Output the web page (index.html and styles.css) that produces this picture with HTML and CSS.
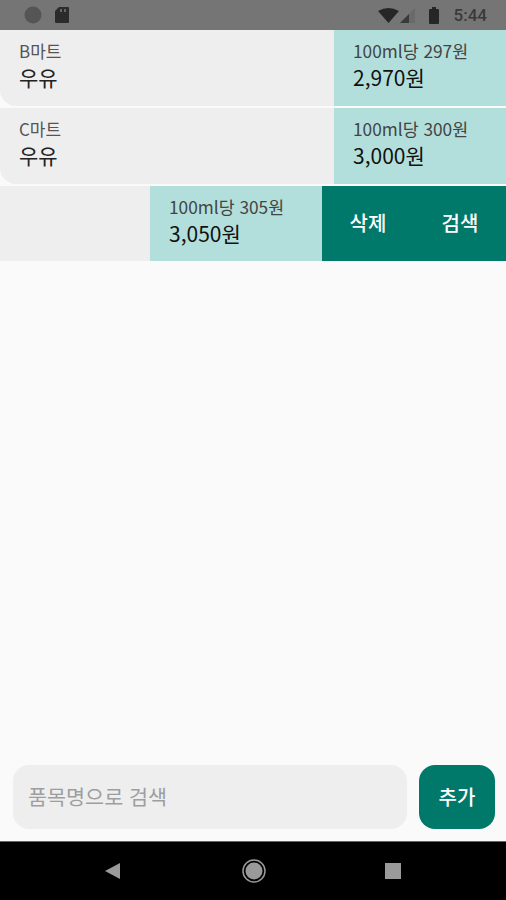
FILE: index.html
```html
<!DOCTYPE html>
<html lang="ko">
<head>
  <meta charset="UTF-8" />
  <meta name="viewport" content="width=device-width, initial-scale=1.0"/>
  <title>단위 가격 비교</title>
  <link rel="stylesheet" href="styles.css">
</head>
<body>
  <div class="app">
    <div class="status-bar">
      <div class="status-left">
        <svg width="18" height="18" viewBox="0 0 18 18"><circle cx="9" cy="9" r="8.5" fill="#555"/></svg>
        <svg width="16" height="18" viewBox="0 0 16 18"><path d="M5 1h9a1 1 0 0 1 1 1v14a1 1 0 0 1-1 1H2a1 1 0 0 1-1-1V5z" fill="#2b2b2b"/><path d="M6 3h2v3H6zM10 3h2v3h-2z" fill="#666"/></svg>
      </div>
      <div class="status-right">
        <svg width="21" height="15" viewBox="0 0 21 15"><path d="M0 3Q10.500-3 21 3L10.500 15z" fill="#262626"/></svg>
        <svg class="signal" width="15" height="15" viewBox="0 0 15 15"><path d="M15 0V15H0z" fill="#6a6a6a"/><path d="M9 6V15H0z" fill="#3a3a3a"/></svg>
        <svg class="battery" width="10" height="17" viewBox="0 0 10 17"><path d="M3 0h4v2h2a1 1 0 0 1 1 1v13a1 1 0 0 1-1 1H1a1 1 0 0 1-1-1V3a1 1 0 0 1 1-1h2z" fill="#262626"/></svg>
        <span class="clock">5:44</span>
      </div>
    </div>

    <div class="list">
      <div class="row">
        <div class="item-info">
          <span class="store">B마트</span>
          <span class="item-name">우유</span>
        </div>
        <div class="price">
          <span class="unit-price">100ml당 297원</span>
          <span class="total-price">2,970원</span>
        </div>
      </div>
      <div class="row">
        <div class="item-info">
          <span class="store">C마트</span>
          <span class="item-name">우유</span>
        </div>
        <div class="price">
          <span class="unit-price">100ml당 300원</span>
          <span class="total-price">3,000원</span>
        </div>
      </div>
      <div class="row row-swiped">
        <div class="item-info item-info-cut"></div>
        <div class="price">
          <span class="unit-price">100ml당 305원</span>
          <span class="total-price">3,050원</span>
        </div>
        <div class="row-actions">
          <span class="row-action">삭제</span>
          <span class="row-action">검색</span>
        </div>
      </div>
    </div>

    <div class="search-bar">
      <div class="search-input">품목명으로 검색</div>
      <div class="add-btn">추가</div>
    </div>

    <div class="nav-bar">
      <svg width="18" height="18" viewBox="0 0 18 18"><path d="M16 1V17L1 9z" fill="#9a9a9a"/></svg>
      <svg width="24" height="24" viewBox="0 0 24 24"><circle cx="12" cy="12" r="11" fill="none" stroke="#9a9a9a" stroke-width="1.500"/><circle cx="12" cy="12" r="8.500" fill="#9a9a9a"/></svg>
      <svg width="16" height="16" viewBox="0 0 16 16"><rect width="16" height="16" fill="#9a9a9a"/></svg>
    </div>
  </div>
</body>
</html>
```

FILE: styles.css
```css
* {
  margin: 0;
  padding: 0;
  box-sizing: border-box;
}

body {
  font-family: "Noto Sans CJK KR", "Noto Sans", sans-serif;
  background: #fafafa;
}

.app {
  width: 506px;
  height: 900px;
  display: flex;
  flex-direction: column;
  overflow: hidden;
}

.status-bar {
  height: 30px;
  flex-shrink: 0;
  background: #757575;
  display: flex;
  align-items: center;
  justify-content: space-between;
  padding: 0 19px 0 24px;
}

.status-left {
  display: flex;
  align-items: center;
  gap: 12px;
}

.status-right {
  display: flex;
  align-items: center;
}

.signal {
  margin-left: 1px;
  margin-top: 1px;
}

.battery {
  margin-left: 14px;
}

.clock {
  margin-left: 15px;
  font-family: Roboto, sans-serif;
  font-size: 17px;
  font-weight: 500;
  color: #3a3a3a;
}

.list {
  flex: 1;
  display: flex;
  flex-direction: column;
  gap: 2px;
}

.row {
  height: 76px;
  display: flex;
}

.row-swiped {
  height: 75px;
}

.item-info {
  width: 334px;
  background: #eeeeee;
  border-bottom-left-radius: 16px;
  padding: 9px 0 0 19px;
  display: flex;
  flex-direction: column;
}

.item-info-cut {
  width: 150px;
  border-radius: 0;
}

.store {
  font-size: 17px;
  line-height: 24px;
  color: #555;
}

.item-name {
  font-size: 21px;
  line-height: 29px;
  color: #222;
}

.price {
  width: 172px;
  background: #b2dfdb;
  padding: 9px 0 0 19px;
  display: flex;
  flex-direction: column;
}

.unit-price {
  font-size: 17.3px;
  line-height: 24px;
  color: #444;
}

.total-price {
  font-size: 21px;
  line-height: 29px;
  color: #111;
}

.row-actions {
  flex: 1;
  background: #00796b;
  display: flex;
}

.row-action {
  flex: 1;
  display: flex;
  align-items: center;
  justify-content: center;
  padding-bottom: 2px;
  font-size: 20px;
  font-weight: 500;
  color: #fff;
}

.search-bar {
  flex-shrink: 0;
  display: flex;
  gap: 12px;
  padding: 0 11px 12px 13px;
}

.search-input {
  flex: 1;
  height: 64px;
  background: #eeeeee;
  border-radius: 16px;
  padding: 0 0 2px 15px;
  display: flex;
  align-items: center;
  font-size: 20.7px;
  color: #9e9e9e;
}

.add-btn {
  width: 76px;
  height: 64px;
  background: #00796b;
  border-radius: 16px;
  padding-bottom: 2px;
  display: flex;
  align-items: center;
  justify-content: center;
  font-size: 20px;
  font-weight: 500;
  color: #fff;
}

.nav-bar {
  height: 59px;
  flex-shrink: 0;
  background: #000;
  border-top: 1px solid #666;
  display: flex;
  align-items: center;
  justify-content: space-between;
  padding: 0 105px 0 104px;
}
```
